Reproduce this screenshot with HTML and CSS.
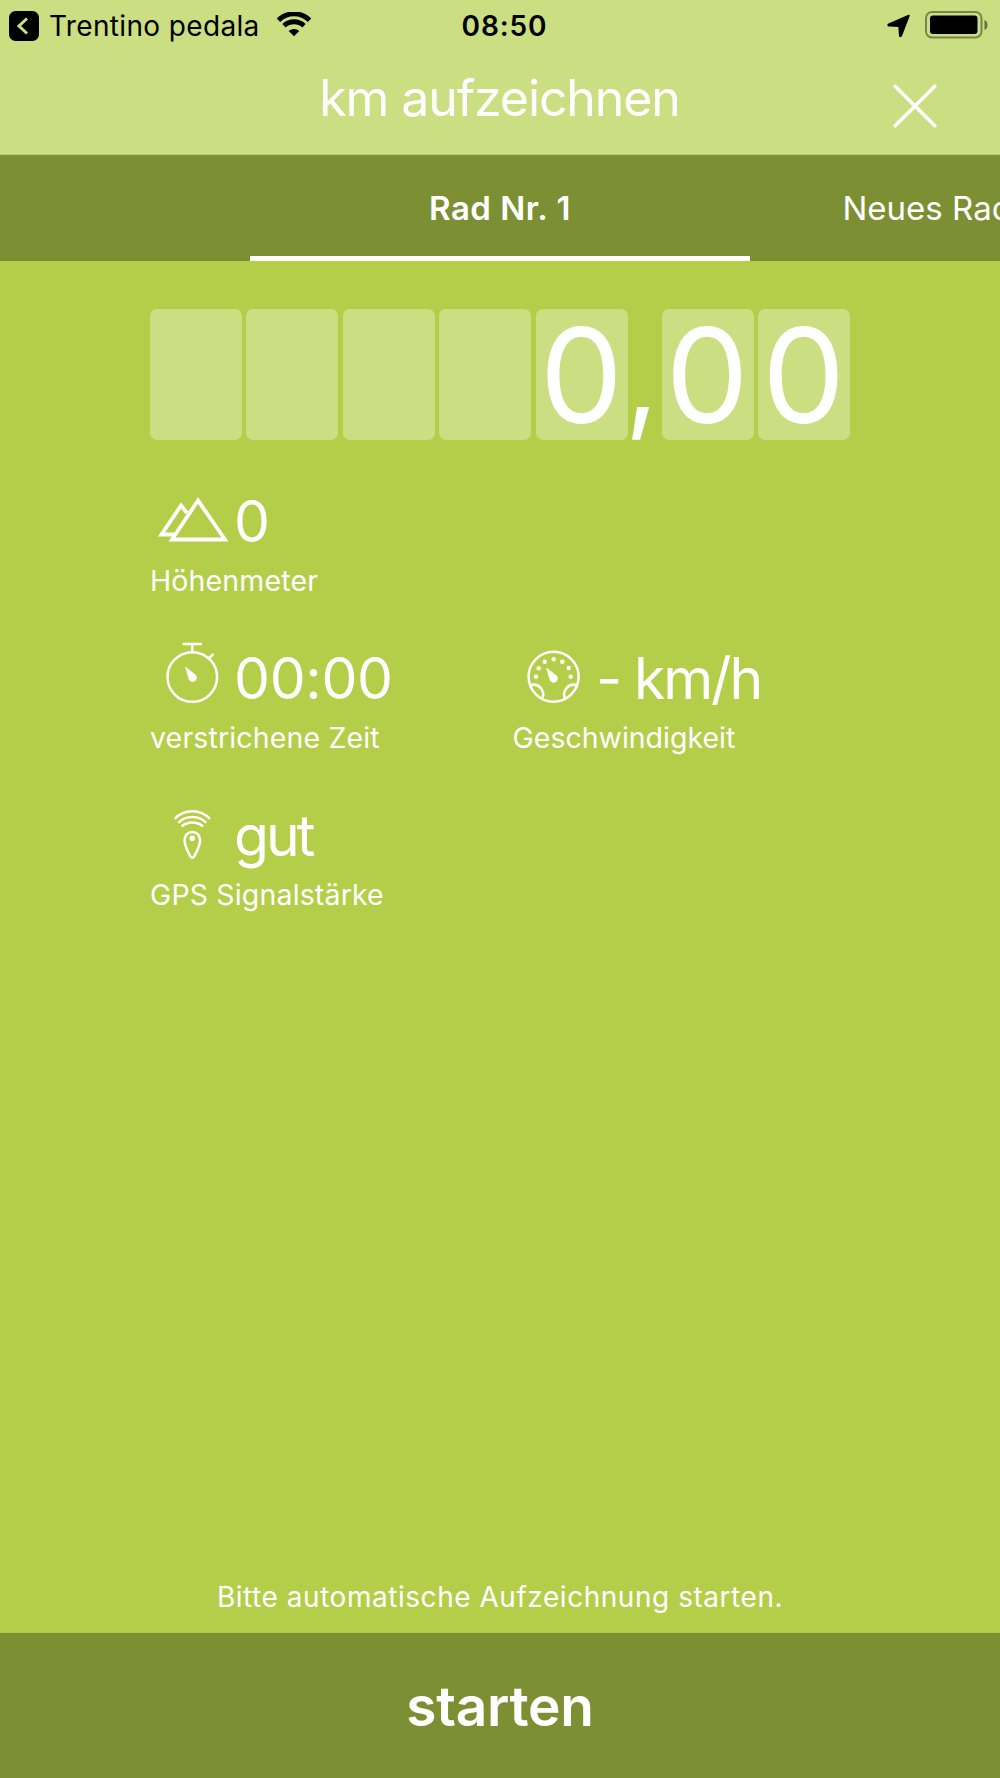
FILE: index.html
```html
<!DOCTYPE html>
<html lang="de">

<head>
    <meta charset="UTF-8">
    <meta name="viewport" content="width=device-width, initial-scale=1.0">
    <title>km aufzeichnen</title>
    <link rel="stylesheet" href="styles.css">
</head>

<body>
    <header class="header">
        <div class="status-bar">
            <div class="status-left">
                <svg class="back-icon" width="30" height="30" viewBox="0 0 30 30">
                    <rect width="30" height="30" rx="6.5" />
                    <path d="M18 7.5L10 15l8 7.5" />
                </svg>
                <span class="back-label">Trentino pedala</span>
                <svg class="wifi-icon" width="34" height="25" viewBox="0 0 34 25">
                    <path d="M1.5 8.2C10-.4 24-.4 32.500 8.200M7 13.700c5.600-5.300 14.400-5.300 20 0" />
                    <path class="wifi-dot" d="M17 24.300l-5.300-5.200c2.800-2.700 7.800-2.700 10.600 0z" />
                </svg>
            </div>
            <span class="clock">08:50</span>
            <div class="status-right">
                <svg width="24" height="24" viewBox="0 0 24 24">
                    <path d="M21.500 .8c.9-.3 1.500.3 1.200 1.200l-7.700 20c-.7 1.700-3 1.400-3.100-.4l-.5-8.500-9.500-.6c-1.800-.1-2.100-2.200-.5-2.900z" />
                </svg>
                <svg class="battery" width="64" height="28" viewBox="0 0 64 28">
                    <rect class="battery-case" x="1" y="1" width="55.500" height="25.500" rx="6" />
                    <rect x="5" y="4.500" width="47.500" height="18.500" rx="3" />
                    <path class="battery-tip" d="M59.500 9c4 1.500 4 8.500 0 10z" />
                </svg>
            </div>
        </div>
        <div class="title-bar">
            <h1 class="title">km aufzeichnen</h1>
            <svg class="close" width="44" height="44" viewBox="0 0 44 44">
                <path d="M2.200 2.200l39.600 39.600M41.800 2.200L2.200 41.800" />
            </svg>
        </div>
    </header>

    <nav class="tabs">
        <a class="tab active"><span>Rad Nr. 1</span></a>
        <a class="tab next"><span>Neues Rad</span></a>
    </nav>

    <main class="content">
        <div class="counter">
            <span class="digit"></span>
            <span class="digit"></span>
            <span class="digit"></span>
            <span class="digit"></span>
            <span class="digit">0</span>
            <span class="comma">,</span>
            <span class="digit">0</span>
            <span class="digit">0</span>
        </div>

        <div class="metrics">
            <div class="metric wide">
                <div class="metric-row">
                    <svg class="icon bold" width="84" height="70" viewBox="0 0 84 70">
                        <path d="M48 13.500L22 52.500h53z" />
                        <path d="M24 47.500H11.500L31 18.500l6 7.500" />
                    </svg>
                    <span class="value">0</span>
                </div>
                <div class="label">Höhenmeter</div>
            </div>

            <div class="metric">
                <div class="metric-row">
                    <svg class="icon" width="84" height="70" viewBox="0 0 84 70">
                        <circle cx="42.300" cy="33" r="24.800" />
                        <path d="M32.500 0h19.500M42.300 0v8M58.500 14.500l5-4.500" />
                        <path class="solid" d="M35 22.200l10.600 8.600a4.200 4.200 0 1 1-7.200 3.200z" />
                    </svg>
                    <span class="value value-time">00:00</span>
                </div>
                <div class="label">verstrichene Zeit</div>
            </div>

            <div class="metric">
                <div class="metric-row">
                    <svg class="icon" width="84" height="70" viewBox="0 0 84 70">
                        <circle cx="41.600" cy="32.700" r="25" />
                        <path d="M18.300 41.300a9.600 9.600 0 0 1 11.400 14M65 41.300a9.600 9.600 0 0 0-11.400 14" />
                        <g class="solid">
                            <circle cx="24" cy="32.700" r="2.200" />
                            <circle cx="26.700" cy="24.300" r="2.200" />
                            <circle cx="32.700" cy="17.700" r="2.200" />
                            <circle cx="41.700" cy="15.300" r="2.200" />
                            <circle cx="50.300" cy="17.700" r="2.200" />
                            <circle cx="56.700" cy="24" r="2.200" />
                            <circle cx="58.700" cy="32.700" r="2.200" />
                            <path d="M34 23.400l10.400 7.900a4.200 4.200 0 1 1-7 3.500z" />
                        </g>
                    </svg>
                    <span class="value value-speed">- km/h</span>
                </div>
                <div class="label label-speed">Geschwindigkeit</div>
            </div>

            <div class="metric wide">
                <div class="metric-row">
                    <svg class="icon" width="84" height="70" viewBox="0 0 84 70">
                        <path d="M24.700 18c9.500-10.200 25.700-10.200 35.200 0M28.300 21.800c7.600-7.600 20.400-7.600 28 0M31.700 25.500c5.800-5.200 15.400-5.200 21.200 0" />
                        <path d="M42.300 31c-4.600 0-7.800 3.500-7.800 8 0 5.500 3.200 11.500 5.800 16.200q2 3 4 0c2.600-4.700 5.800-10.700 5.800-16.200 0-4.500-3.200-8-7.800-8z" />
                        <circle class="solid" cx="42.300" cy="37.300" r="2.800" />
                    </svg>
                    <span class="value value-gps">gut</span>
                </div>
                <div class="label">GPS Signalstärke</div>
            </div>
        </div>

        <p class="hint">Bitte automatische Aufzeichnung starten.</p>
    </main>

    <button class="start-btn">starten</button>
</body>

</html>
```

FILE: styles.css
```css
* {
    box-sizing: border-box;
}

body {
    margin: 0;
    width: 1000px;
    height: 1778px;
    display: flex;
    flex-direction: column;
    overflow: hidden;
    font-family: Inter, "Liberation Sans", sans-serif;
    background: #b4ce49;
    color: #fff;
}

.header {
    height: 155px;
    background: #cbde81;
    border-bottom: 1px solid #b7cb69;
}

/* status bar */
.status-bar {
    display: grid;
    grid-template-columns: 1fr auto 1fr;
    align-items: center;
    height: 51px;
    padding: 0 11px 0 9px;
    color: #000;
}

.status-left,
.status-right {
    display: flex;
    align-items: center;
}

.status-right {
    justify-content: flex-end;
    gap: 14px;
}

.battery {
    margin-top: -2px;
}

.back-icon path {
    fill: none;
    stroke: #cbde81;
    stroke-width: 3;
}

.back-label {
    margin-left: 10px;
    font-size: 28px;
    letter-spacing: 0.35px;
}

.wifi-icon {
    margin: -3px 0 0 17.5px;
    fill: none;
    stroke: #000;
    stroke-width: 4.8;
}

.wifi-icon .wifi-dot {
    fill: #000;
    stroke: none;
}

.clock {
    padding-left: 11px;
    font-size: 28px;
    font-weight: 600;
    letter-spacing: 0.9px;
}

.battery-case {
    fill: none;
    stroke: #000;
    stroke-opacity: 0.4;
    stroke-width: 2;
}

.battery-tip {
    fill-opacity: 0.5;
}

.title-bar {
    display: grid;
    grid-template-columns: 1fr auto 1fr;
    align-items: center;
    height: 94px;
}

.title {
    grid-column: 2;
    margin: 0 1px 0 0;
    font-size: 50px;
    font-weight: 400;
    line-height: 60px;
    letter-spacing: -1.1px;
}

.close {
    justify-self: end;
    margin: 16px 63px 0 0;
    fill: none;
    stroke: #fff;
    stroke-width: 3.6;
    stroke-linecap: round;
}

/* bike tabs */
.tabs {
    display: flex;
    height: 106px;
    padding-left: 250px;
    overflow: hidden;
    background: #7d8f33;
    font-size: 33px;
}

.tab {
    flex: none;
    width: 500px;
    text-align: center;
    line-height: 106px;
    white-space: nowrap;
}

.tab.active {
    font-weight: 600;
    letter-spacing: 0.5px;
    border-bottom: 5px solid #fff;
}

.tab.next {
    padding-left: 92.5px;
    text-align: left;
}

.content {
    flex: 1;
    display: flex;
    flex-direction: column;
    padding: 48px 150px 0;
}

/* distance counter */
.counter {
    display: flex;
    gap: 4.6px;
    height: 131px;
}

.digit {
    width: 92px;
    border-radius: 7px;
    background: #cbde81;
    font-size: 132px;
    line-height: 132px;
    text-align: center;
    text-indent: -1px;
}

.comma {
    width: 34px;
    margin: 0 -4.6px;
    font-size: 118px;
    line-height: 135px;
    text-align: center;
    text-indent: -6px;
}

/* metrics */
.metrics {
    display: grid;
    grid-template-columns: 362px 362px;
    grid-auto-rows: 157px;
    margin-top: 47px;
}

.metric.wide {
    grid-column: 1 / 3;
}

.metric-row {
    display: flex;
    height: 70px;
}

.icon {
    flex: none;
    overflow: visible;
    fill: none;
    stroke: #fff;
    stroke-width: 2.5;
}

.icon.bold {
    stroke-width: 3.8;
}

.icon .solid {
    fill: #fff;
    stroke: none;
}

.value {
    font-size: 57px;
    line-height: 70px;
    white-space: nowrap;
}

.value-time {
    letter-spacing: -0.3px;
}

.value-speed {
    letter-spacing: -2.1px;
}

.value-gps {
    letter-spacing: -3px;
}

.label {
    margin-top: 7px;
    font-size: 28.5px;
    line-height: 34px;
    letter-spacing: 0.15px;
    white-space: nowrap;
}

.label-speed {
    padding-left: 0.5px;
    letter-spacing: 0;
}

.hint {
    margin: auto -20px 19px;
    font-size: 28px;
    line-height: 34px;
    letter-spacing: 0.54px;
    text-align: center;
    white-space: nowrap;
}

.start-btn {
    height: 145px;
    padding: 0;
    border: none;
    background: #7d8f33;
    color: #fff;
    font-family: inherit;
    font-size: 55px;
    font-weight: 600;
    letter-spacing: -0.3px;
}
```
